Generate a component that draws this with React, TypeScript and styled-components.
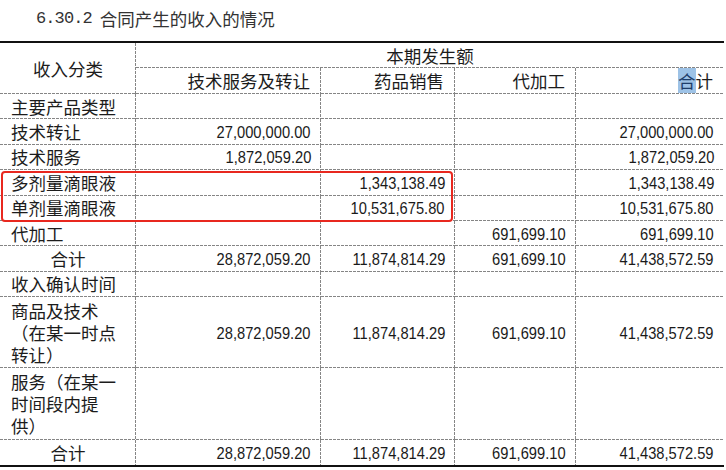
import React from "react";
import styled, { createGlobalStyle } from "styled-components";

const Global = createGlobalStyle`
  html, body { margin: 0; padding: 0; background: #fff; }
  body { width: 726px; height: 470px; overflow: hidden; }
`;

const CJK = `"Noto Sans CJK SC", "Noto Sans", sans-serif`;
const LINE = "#858585";

const Page = styled.div`
  width: 726px;
  font-family: ${CJK};
  color: #1c1c1c;
`;

const Title = styled.div`
  height: 36px;
  margin-bottom: 5px;
  padding-left: 36px;
  display: flex;
  align-items: center;
  font-size: 17.5px;
  color: #333;
`;

const TitleNum = styled.span`
  font-family: "Liberation Mono", monospace;
  font-size: 17px;
  letter-spacing: -0.9px;
  margin-right: 8px;
`;

const TableWrap = styled.div`
  position: relative;
  width: 724px;
`;

const Grid = styled.div`
  display: grid;
  grid-template-columns: 136px 185px 134px 121px 148px;
  grid-template-rows: 25px 26px repeat(8, 25.375px) 71px 72px 25px;
  border-top: 2px solid #111;
  border-bottom: 2px solid #111;
  & > div:last-child > * { --hb: 0 0; }
`;

const Row = styled.div`
  display: contents;
  & > :last-child { --vb: 0 0; }
`;

const Cell = styled.div<{ $align?: "left" | "center" | "right"; $colSpan?: number; $rowSpan?: number }>`
  box-sizing: border-box;
  background:
    repeating-linear-gradient(90deg, ${LINE} 0 3px, transparent 3px 4px) left bottom / var(--hb, 100% 1px) no-repeat,
    repeating-linear-gradient(180deg, ${LINE} 0 3px, transparent 3px 4px) right top / var(--vb, 1px 100%) no-repeat;
  display: flex;
  flex-direction: column;
  justify-content: center;
  align-items: ${(p) => (p.$align === "right" ? "flex-end" : p.$align === "center" ? "center" : "flex-start")};
  padding: 0 11px;
  font-size: 17.5px;
  line-height: 22px;
  white-space: nowrap;
  ${(p) => (p.$colSpan ? `grid-column: span ${p.$colSpan};` : "")}
  ${(p) => (p.$rowSpan ? `grid-row: span ${p.$rowSpan};` : "")}
`;

const LabelLine = styled.span`
  display: block;
  height: 22px;
  line-height: 22px;
`;

const NumCell = styled(Cell).attrs({ $align: "right" as const })`
  padding-right: 10px;
`;

const Num = styled.span`
  display: inline-block;
  font-family: "Liberation Sans", Arial, sans-serif;
  font-size: 16.5px;
  color: #1a1a1a;
  transform: scaleX(0.89);
  transform-origin: right center;
`;

const Highlight = styled.span`
  background: #9dc2e6;
  color: #1d3d6a;
`;

const RedBox = styled.div`
  position: absolute;
  left: 1px;
  top: 130px;
  width: 452px;
  height: 51px;
  box-sizing: border-box;
  border: 2.5px solid #e8281f;
  border-radius: 4px;
  pointer-events: none;
`;

type DataRow = { label: string[]; center?: boolean; values: string[] };

const totals = ["28,872,059.20", "11,874,814.29", "691,699.10", "41,438,572.59"];

const rows: DataRow[] = [
  { label: ["主要产品类型"], values: ["", "", "", ""] },
  { label: ["技术转让"], values: ["27,000,000.00", "", "", "27,000,000.00"] },
  { label: ["技术服务"], values: ["1,872,059.20", "", "", "1,872,059.20"] },
  { label: ["多剂量滴眼液"], values: ["", "1,343,138.49", "", "1,343,138.49"] },
  { label: ["单剂量滴眼液"], values: ["", "10,531,675.80", "", "10,531,675.80"] },
  { label: ["代加工"], values: ["", "", "691,699.10", "691,699.10"] },
  { label: ["合计"], center: true, values: totals },
  { label: ["收入确认时间"], values: ["", "", "", ""] },
  { label: ["商品及技术", "（在某一时点", "转让）"], values: totals },
  { label: ["服务（在某一", "时间段内提", "供）"], values: ["", "", "", ""] },
  { label: ["合计"], center: true, values: totals },
];

export default function App() {
  return (
    <Page>
      <Global />
      <Title>
        <TitleNum>6.30.2</TitleNum>合同产生的收入的情况
      </Title>
      <TableWrap>
        <Grid>
          <Row>
            <Cell $align="center" $rowSpan={2}>收入分类</Cell>
            <Cell $align="center" $colSpan={4}>本期发生额</Cell>
          </Row>
          <Row>
            <Cell $align="right">技术服务及转让</Cell>
            <Cell $align="right">药品销售</Cell>
            <Cell $align="right">代加工</Cell>
            <Cell $align="right">
              <span><Highlight>合</Highlight>计</span>
            </Cell>
          </Row>
          {rows.map((r, i) => (
            <Row key={i}>
              <Cell $align={r.center ? "center" : "left"}>
                {r.label.map((l, j) => (
                  <LabelLine key={j}>{l}</LabelLine>
                ))}
              </Cell>
              {r.values.map((v, j) => (
                <NumCell key={j}>{v && <Num>{v}</Num>}</NumCell>
              ))}
            </Row>
          ))}
        </Grid>
        <RedBox />
      </TableWrap>
    </Page>
  );
}
